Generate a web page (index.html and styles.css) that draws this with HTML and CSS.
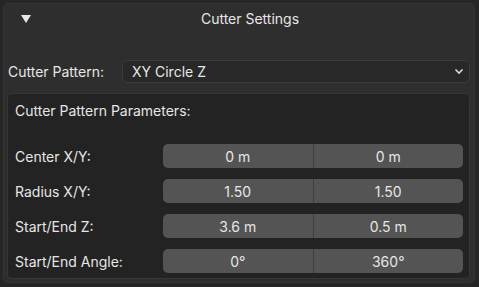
FILE: index.html
```html
<!DOCTYPE html>
<html lang="en">
<head>
    <meta charset="UTF-8">
    <title>Cutter Settings</title>
    <link rel="stylesheet" href="styles.css">
</head>
<body>
    <div class="panel">
        <div class="panel-header">
            <svg class="arrow" width="12" height="10" viewBox="0 0 12 10"><path d="M1 1 L11 1 L6 9 Z" fill="#e8e8e8"/></svg>
            <span class="panel-title">Cutter Settings</span>
        </div>

        <div class="pattern-row">
            <span class="label">Cutter Pattern:</span>
            <div class="dropdown">
                <span>XY Circle Z</span>
                <svg width="10" height="7" viewBox="0 0 10 7"><path d="M1.5 1.5 L5 5 L8.5 1.5" stroke="#dcdcdc" stroke-width="1.6" fill="none"/></svg>
            </div>
        </div>

        <div class="subpanel">
            <div class="sub-title">Cutter Pattern Parameters:</div>

            <div class="param-row">
                <span class="label">Center X/Y:</span>
                <div class="field-pair"><div class="field">0 m</div><div class="field">0 m</div></div>
            </div>
            <div class="param-row">
                <span class="label">Radius X/Y:</span>
                <div class="field-pair"><div class="field">1.50</div><div class="field">1.50</div></div>
            </div>
            <div class="param-row">
                <span class="label">Start/End Z:</span>
                <div class="field-pair"><div class="field">3.6 m</div><div class="field">0.5 m</div></div>
            </div>
            <div class="param-row">
                <span class="label">Start/End Angle:</span>
                <div class="field-pair"><div class="field">0°</div><div class="field">360°</div></div>
            </div>
        </div>
    </div>
</body>
</html>
```

FILE: styles.css
```css
body {
    margin: 0;
    background: #262626;
    font-family: 'Inter', 'Noto Sans', sans-serif;
    font-size: 14px;
    color: #e6e6e6;
    height: 287px;
    overflow: hidden;
}
.panel {
    margin: 3px 4px 0 3px;
    height: 280px;
    box-sizing: border-box;
    background: #2e2e2e;
    border: 1px solid #353535;
    border-radius: 5px;
}
.panel-header {
    height: 29px;
    display: flex;
    align-items: center;
}
.arrow {
    margin-left: 16px;
}
.panel-title {
    flex: 1;
    text-align: center;
    margin-right: 6px;
}
.pattern-row {
    display: flex;
    align-items: center;
    margin-top: 27px;
    padding: 0 4px 0 4px;
}
.pattern-row .label {
    width: 114px;
}
.dropdown {
    flex: 1;
    height: 23px;
    box-sizing: border-box;
    background: #282828;
    border: 1px solid #3c3c3c;
    border-radius: 5px;
    display: flex;
    align-items: center;
    justify-content: space-between;
    padding: 0 5px 0 9px;
}
.subpanel {
    margin: 10px 4px 0 3px;
    height: 186px;
    box-sizing: border-box;
    background: #232323;
    border: 1px solid #363636;
    border-radius: 4px;
    padding: 0 6px 0 7px;
}
.sub-title {
    height: 34px;
    line-height: 34px;
}
.param-row {
    display: flex;
    align-items: center;
    height: 24px;
    margin-top: 11px;
}
.param-row:nth-child(2) {
    margin-top: 16px;
}
.param-row .label {
    width: 148px;
}
.field-pair {
    flex: 1;
    display: flex;
    height: 24px;
    border-radius: 5px;
    overflow: hidden;
    background: #545454;
}
.field {
    flex: 1;
    display: flex;
    align-items: center;
    justify-content: center;
}
.field + .field {
    border-left: 1px solid #3e3e3e;
}
```
